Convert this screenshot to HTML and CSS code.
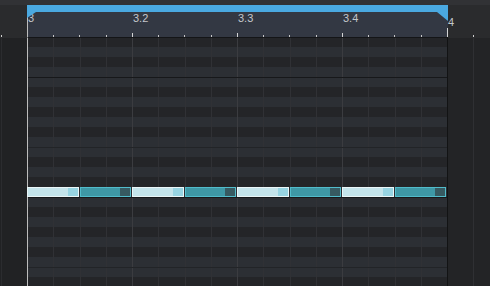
FILE: index.html
```html
<!DOCTYPE html>
<html lang="en">
<head>
  <meta charset="UTF-8">
  <title>Piano Roll</title>
  <link rel="stylesheet" href="styles.css">
</head>
<body>

  <div class="editor">
    <!-- Header: loop bar + ruler -->
    <div class="header">
      <div class="strip"></div>
      <div class="header-row">
        <div class="gutter-head"></div>
        <div class="timeline">
          <div class="loop"></div>
          <div class="ruler">
            <span class="beat">3</span>
            <span class="beat">3.2</span>
            <span class="beat">3.3</span>
            <span class="beat">3.4</span>
          </div>
        </div>
        <div class="after-head"><span class="beat">4</span></div>
      </div>
    </div>

    <!-- Note lanes -->
    <div class="body">
      <div class="gutter"></div>
      <div class="lane">
        <div class="row black first"></div>
        <div class="row white"></div>
        <div class="row black"></div>
        <div class="row white"></div>
        <div class="row white octave"></div>
        <div class="row black"></div>
        <div class="row white"></div>
        <div class="row black"></div>
        <div class="row white"></div>
        <div class="row black"></div>
        <div class="row white"></div>
        <div class="row white split"></div>
        <div class="row black"></div>
        <div class="row white"></div>
        <div class="row black"></div>
        <div class="row white">
          <div class="notes">
            <div class="note light"></div>
            <div class="note teal"></div>
            <div class="note light"></div>
            <div class="note teal"></div>
            <div class="note light"></div>
            <div class="note teal"></div>
            <div class="note light"></div>
            <div class="note teal"></div>
          </div>
        </div>
        <div class="row white octave"></div>
        <div class="row black"></div>
        <div class="row white"></div>
        <div class="row black"></div>
        <div class="row white"></div>
        <div class="row black"></div>
        <div class="row white"></div>
        <div class="row white split"></div>
        <div class="row black"></div>
      </div>
      <div class="after"></div>
    </div>
  </div>

</body>
</html>
```

FILE: styles.css
```css
/* Basic Reset */
* {
  margin: 0;
  padding: 0;
  box-sizing: border-box;
}

body {
  font-family: "Liberation Sans", Arial, sans-serif;
  background-color: #222325;
  overflow: hidden;
}

.editor {
  width: 490px;
  height: 286px;
  overflow: hidden;
}

/* Header */
.header {
  background-color: #2a2b2d;
}

.strip {
  height: 5px;
  background-color: #313235;
}

.header-row {
  display: flex;
  height: 33px;
}

.gutter-head {
  width: 27px;
  background: linear-gradient(#cfcfcf, #cfcfcf) no-repeat 1px 30px / 1px 2px;
}

.timeline {
  width: 421px;
  display: flex;
  flex-direction: column;
}

/* Loop range bar */
.loop {
  position: relative;
  height: 7px;
  background-color: #4aa9e1;
}

.loop::before,
.loop::after {
  content: "";
  position: absolute;
  top: 100%;
  background-color: #4aa9e1;
  z-index: 2;
}

.loop::before {
  left: 0;
  width: 9px;
  height: 6px;
  clip-path: polygon(0 0, 100% 0, 0 100%);
}

.loop::after {
  right: 0;
  width: 11px;
  height: 9px;
  clip-path: polygon(0 0, 100% 0, 100% 100%);
}

/* Ruler */
.ruler {
  flex: 1;
  display: flex;
  background-color: #333843;
  border-left: 1px solid #bdbdbd;
  border-bottom: 1px solid #141517;
  background-image:
    linear-gradient(#d4d4d4, #d4d4d4),
    repeating-linear-gradient(90deg, transparent 0 104px, #d4d4d4 104px 105px),
    repeating-linear-gradient(90deg, transparent 0 25.25px, #c8c8c8 25.25px 26.25px);
  background-repeat: no-repeat, repeat-x, repeat-x;
  background-size: 1px 9px, 100% 4px, 100% 2px;
  background-position: right bottom, left bottom, left bottom;
}

.beat {
  width: 105px;
  font-size: 11px;
  line-height: 13px;
  color: #c3c6cb;
}

.after-head {
  flex: 1;
  padding-top: 7px;
  background-image: linear-gradient(#cfcfcf, #cfcfcf);
  background-repeat: no-repeat;
  background-size: 1px 2px;
  background-position: 25px 30px;
}

/* Body */
.body {
  display: flex;
  height: 248px;
}

.gutter {
  width: 27px;
  background-color: #212224;
  background-image: linear-gradient(#2b2c2f, #2b2c2f);
  background-repeat: repeat-y;
  background-size: 1px 100%;
  background-position: 1px 0;
}

.lane {
  width: 421px;
  border-left: 1px solid #bdbdbd;
  border-right: 1px solid #121314;
  display: flex;
  flex-direction: column;
}

.row {
  flex: 0 0 10px;
  background-image:
    repeating-linear-gradient(90deg, transparent 0 104px, #3b3c40 104px 105px),
    repeating-linear-gradient(90deg, transparent 0 25.25px, #303135 25.25px 26.25px);
}

.row.first {
  flex-basis: 9px;
}

.row.white {
  background-color: #2c2f34;
}

.row.black {
  background-color: #242528;
}

.row.octave {
  border-top: 1px solid #17181a;
}

.row.split {
  border-top: 1px solid #222427;
}

.after {
  flex: 1;
  background-color: #232426;
  background-image: linear-gradient(#2f3033, #2f3033);
  background-repeat: repeat-y;
  background-size: 1px 100%;
  background-position: 25px 0;
}

/* Notes */
.notes {
  display: grid;
  grid-template-columns: repeat(8, 52.5px);
  width: 420px;
  height: 100%;
  margin-left: -1px;
}

.note {
  margin-right: 1px;
  border: 1px solid;
}

.note.light {
  border-color: #eaf6f8;
  background: linear-gradient(to left, #97d4e2 10px, #c4e4eb 10px);
}

.note.teal {
  border-color: #52bccb;
  background: linear-gradient(to left, #375a61 10px, #3e98a6 10px);
}
```
